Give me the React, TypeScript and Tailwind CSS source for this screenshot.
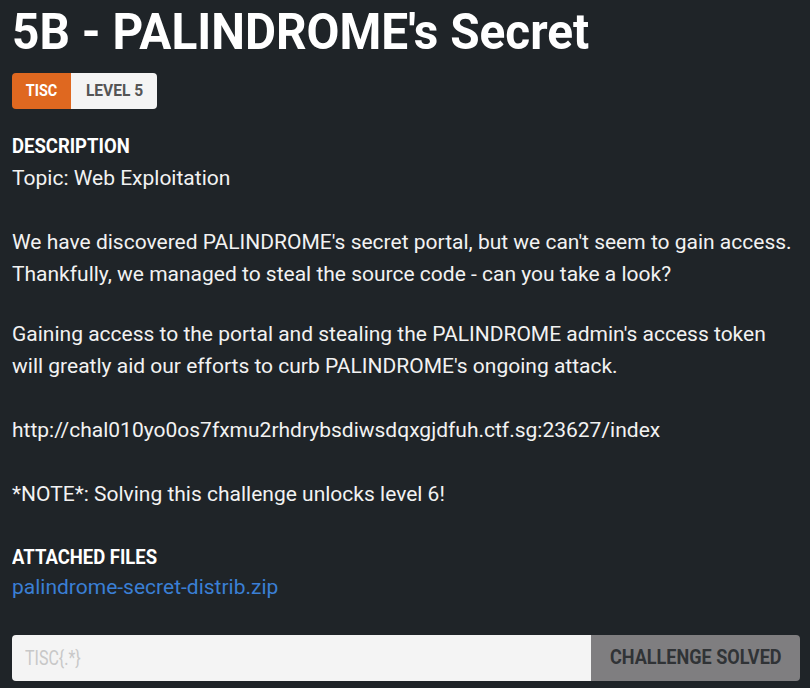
export default function App() {
  return (
    <div className="min-h-[688px] w-full bg-[#1f2428] px-3 pt-1 text-[#f2f2f2]" style={{ fontFamily: "Roboto, sans-serif" }}>
      <h1 className="text-[50px] font-bold leading-[56px] text-white">
        <span className="inline-block origin-left scale-x-[0.955]">5B - PALINDROME's Secret</span>
      </h1>
      <div className="mt-[13px] flex h-[36px] w-fit overflow-hidden rounded-[4px] text-[16px] font-bold">
        <span className="flex w-[59px] items-center justify-center bg-[#df6820] text-white">
          <span className="inline-block scale-x-[0.9]">TISC</span>
        </span>
        <span className="flex w-[86px] items-center justify-center bg-[#f4f4f4] text-[#555]">
          <span className="inline-block scale-x-[0.97]">LEVEL 5</span>
        </span>
      </div>
      <div className="mt-[25px] text-[21px] font-bold leading-[24px] text-white">
        <span className="inline-block origin-left scale-x-[0.88]">DESCRIPTION</span>
      </div>
      <div className="mt-[4px] text-[21px] leading-[32px]">
        <p>Topic: Web Exploitation</p>
        <p className="mt-[32px]">
          We have discovered PALINDROME's secret portal, but we can't seem to gain access.
          <br />
          Thankfully, we managed to steal the source code - can you take a look?
        </p>
        <p className="mt-[28px]">
          Gaining access to the portal and stealing the PALINDROME admin's access token
          <br />
          will greatly aid our efforts to curb PALINDROME's ongoing attack.
        </p>
        <p className="mt-[32px]">http://chal010yo0os7fxmu2rhdrybsdiwsdqxgjdfuh.ctf.sg:23627/index</p>
        <p className="mt-[32px]">*NOTE*: Solving this challenge unlocks level 6!</p>
      </div>
      <div className="mt-[35px] text-[21px] font-bold leading-[24px] text-white">
        <span className="inline-block origin-left scale-x-[0.88]">ATTACHED FILES</span>
      </div>
      <a className="mt-[4px] block text-[21px] leading-[28px] text-[#3a7fd5]">palindrome-secret-distrib.zip</a>
      <div className="mt-[34px] flex h-[46px] w-[788px] overflow-hidden rounded-[4px]">
        <div className="flex flex-1 items-center bg-[#f4f4f4] px-[13px] text-[20px] text-[#c8c8c8]">
          <span className="inline-block origin-left scale-x-[0.8]">{"TISC{.*}"}</span>
        </div>
        <div className="flex w-[209px] items-center justify-center bg-[#7f7e80] text-[21px] font-bold text-[#303336]">
          <span className="inline-block scale-x-[0.86]">CHALLENGE SOLVED</span>
        </div>
      </div>
    </div>
  );
}
